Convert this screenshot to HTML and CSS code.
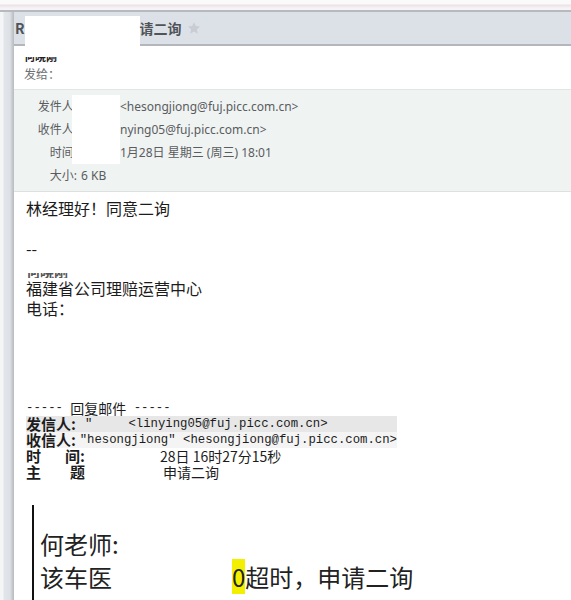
FILE: index.html
```html
<!DOCTYPE html>
<html lang="zh-CN">
<head>
    <meta charset="UTF-8">
    <title>回复: 申请二询</title>
    <link rel="stylesheet" href="styles.css">
</head>
<body>
    <div class="window">
        <div class="topbar"></div>
        <div class="layout">
            <div class="rail"></div>

            <!-- Message view -->
            <main class="mail">
                <div class="mail-title">
                    <span class="title-text">R</span>
                    <span class="redact title-redact"></span>
                    <span class="title-text">请二询</span>
                    <svg class="star" width="14" height="14" viewBox="0 0 24 24">
                        <path d="M12 1.8l3.1 6.9 7.4.7-5.6 5 1.7 7.4L12 17.9l-6.6 3.9 1.7-7.4-5.6-5 7.4-.7z" fill="#c9cdd3"/>
                    </svg>
                </div>

                <div class="mail-meta">
                    <div class="clip-line name-clip"><span>何晓刚</span></div>
                    <div class="sent-to">发给：</div>
                </div>

                <div class="details">
                    <div class="detail-label">发件人:</div>
                    <div class="detail-value"><span class="redact detail-redact"></span>&lt;hesongjiong@fuj.picc.com.cn&gt;</div>
                    <div class="detail-label">收件人:</div>
                    <div class="detail-value"><span class="redact detail-redact"></span>nying05@fuj.picc.com.cn&gt;</div>
                    <div class="detail-label">时间:</div>
                    <div class="detail-value"><span class="redact detail-redact"></span>1月28日 星期三 (周三) 18:01</div>
                    <div class="detail-label">大小:</div>
                    <div class="detail-value">6 KB</div>
                </div>

                <div class="mail-body">
                    <div class="line">林经理好！同意二询</div>
                    <div class="line"><br></div>
                    <div class="line">--</div>
                    <div class="clip-line sig-clip"><span>何晓刚</span></div>
                    <div class="line">福建省公司理赔运营中心</div>
                    <div class="line">电话：</div>

                    <div class="reply-head">
                        <div class="reply-row"><span class="mono">----- </span>回复邮件<span class="mono"> -----</span></div>
                        <div class="reply-row row-shade"><b class="reply-label">发信人:</b><span class="mono">"</span><span class="reply-gap name-gap"></span><span class="mono">&lt;linying05@fuj.picc.com.cn&gt;</span></div>
                        <div class="reply-row row-light"><b class="reply-label">收信人:</b><span class="mono">"hesongjiong" &lt;hesongjiong@fuj.picc.com.cn&gt;</span></div>
                        <div class="reply-row"><b class="reply-label spread"><span>时</span><span>间:</span></b><span class="reply-gap date-gap"></span>28日 16时27分15秒</div>
                        <div class="reply-row"><b class="reply-label spread"><span>主</span><span>题</span></b><span class="reply-gap subject-gap"></span>申请二询</div>
                    </div>

                    <blockquote class="quote">
                        <div class="quote-line">何老师:</div>
                        <div class="quote-line">该车医<span class="reply-gap quote-gap"></span><span class="mark">0</span>超时，申请二询</div>
                    </blockquote>
                </div>
            </main>
        </div>
    </div>
</body>
</html>
```

FILE: styles.css
```css
* {
    margin: 0;
    padding: 0;
    box-sizing: border-box;
}

body {
    font-family: "Noto Sans", "Noto Sans CJK SC", sans-serif;
    background-color: #ffffff;
    color: #1e1e1e;
    overflow: hidden;
}

.window {
    min-height: 100vh;
    display: flex;
    flex-direction: column;
}

.topbar {
    flex-shrink: 0;
    height: 12px;
    background: linear-gradient(#fbfafb 0, #fbfafb 4px, #e9e1e7 5px, #f3eef2 7px, #f7f4f6 9px);
    border-bottom: 2px solid #b6b9be;
}

.layout {
    flex: 1;
    display: flex;
}

.rail {
    flex-shrink: 0;
    width: 14px;
    background: linear-gradient(90deg, #f4f5f6 0, #f4f5f6 3px, #e2e5e9 4px, #dde0e4 10px, #c8ccd1 12px, #b7bbc0 14px);
}

.mail {
    flex: 1;
    display: flex;
    flex-direction: column;
}

/* Subject band */
.mail-title {
    flex-shrink: 0;
    height: 34px;
    display: flex;
    align-items: center;
    padding-left: 1px;
    background-color: #dce1e8;
    border-bottom: 2px solid #b3b6bc;
}

.title-text {
    font-family: "Noto Sans CJK SC", sans-serif;
    font-size: 14px;
    font-weight: 700;
    color: #4f5458;
}

.redact {
    display: inline-block;
    background-color: #ffffff;
}

.title-redact {
    width: 115px;
    height: 30px;
    align-self: flex-end;
    margin-bottom: -2px;
}

.star {
    margin-left: 5px;
}

/* Sender and recipients */
.mail-meta {
    padding: 11px 0 6px 10px;
}

.clip-line {
    display: flex;
    align-items: flex-end;
    overflow: hidden;
}

.clip-line span {
    font-family: "Noto Sans CJK SC", sans-serif;
    line-height: 14px;
    font-weight: 700;
}

.name-clip {
    height: 6px;
    font-size: 11px;
    color: #222222;
}

.sent-to {
    margin-top: 4px;
    font-size: 12px;
    line-height: 16px;
    color: #6d6f72;
}

.details {
    display: grid;
    grid-template-columns: 63px 1fr;
    column-gap: 4px;
    padding: 5px 0 4px;
    background-color: #eff3f2;
    border-top: 1px solid #e1e5e4;
    border-bottom: 1px solid #dde1e0;
    font-size: 12px;
    line-height: 23px;
    color: #5a5c5f;
}

.detail-label {
    text-align: right;
}

.detail-value {
    display: flex;
}

.detail-redact {
    width: 48px;
    height: 23px;
    margin-left: -9px;
}

/* Message text */
.mail-body {
    padding: 6px 0 0 12px;
    font-family: "Noto Sans CJK SC", sans-serif;
    font-size: 16px;
    line-height: 20px;
    color: #1c1c1c;
}

.sig-clip {
    height: 5px;
    margin-top: 15px;
    font-size: 14px;
    color: #555555;
}

.reply-head {
    margin-top: 82px;
    font-size: 14px;
    line-height: 16px;
}

.reply-row {
    display: flex;
    align-items: center;
    width: 371px;
    height: 16px;
    white-space: nowrap;
}

.row-shade {
    background-color: #e7e7e7;
}

.row-light {
    background-color: #f4f4f4;
}

.reply-label {
    display: inline-flex;
    width: 59px;
    font-size: 15px;
    line-height: 16px;
    font-weight: 700;
}

.spread {
    justify-content: space-between;
}

.mono {
    font-family: "Liberation Mono", monospace;
    font-size: 12.3px;
    white-space: pre;
}

.reply-gap {
    display: inline-block;
    flex-shrink: 0;
}

.name-gap {
    width: 36px;
}

.date-gap {
    width: 75px;
}

.subject-gap {
    width: 78px;
}

.quote {
    margin: 25px 0 0 6px;
    padding: 22px 0 40px 6px;
    border-left: 2px solid #111111;
    font-size: 24px;
    line-height: 33px;
    color: #222222;
}

.quote-gap {
    width: 120px;
}

.mark {
    background-color: #f2f000;
}
```
